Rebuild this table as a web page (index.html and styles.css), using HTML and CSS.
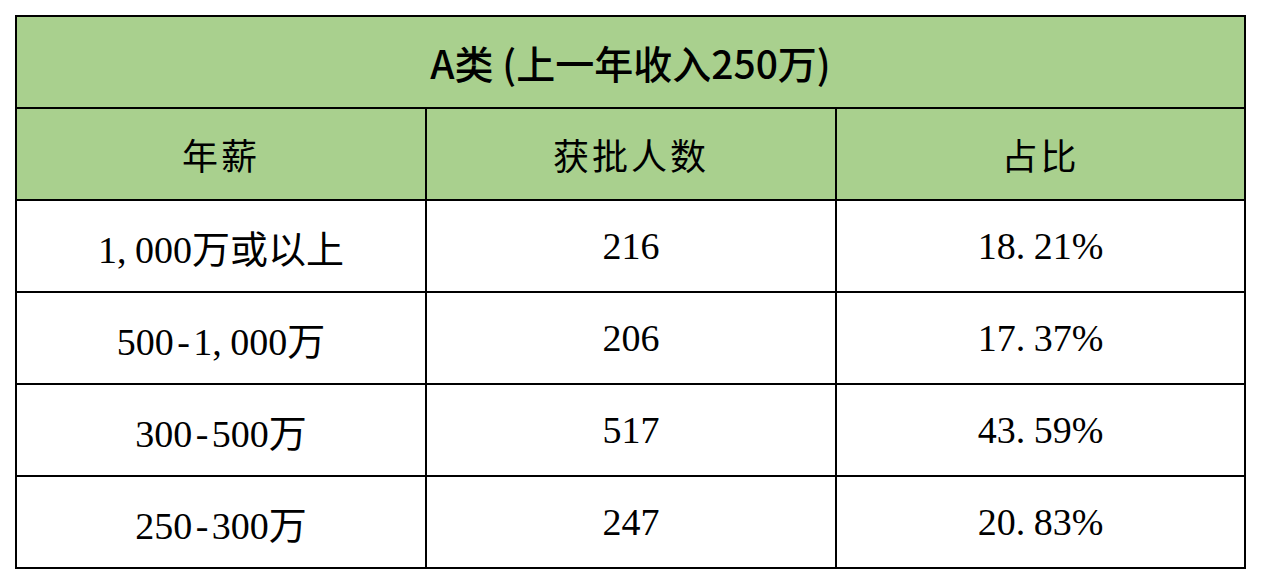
FILE: index.html
```html
<!DOCTYPE html>
<html lang="zh">
<head>
<meta charset="utf-8">
<title>A类 (上一年收入250万)</title>
<link rel="stylesheet" href="styles.css">
</head>
<body>
<table class="grid">
  <colgroup>
    <col class="c1"><col class="c2"><col class="c3">
  </colgroup>
  <thead>
    <tr><th class="title" colspan="3">A类 (上一年收入250万)</th></tr>
    <tr class="head"><th>年薪</th><th>获批人数</th><th>占比</th></tr>
  </thead>
  <tbody>
    <tr><td>1<span class="pt">,</span>000万或以上</td><td>216</td><td>18<span class="pt">.</span>21%</td></tr>
    <tr><td>500<span class="dash">-</span>1<span class="pt">,</span>000万</td><td>206</td><td>17<span class="pt">.</span>37%</td></tr>
    <tr><td>300<span class="dash">-</span>500万</td><td>517</td><td>43<span class="pt">.</span>59%</td></tr>
    <tr><td>250<span class="dash">-</span>300万</td><td>247</td><td>20<span class="pt">.</span>83%</td></tr>
  </tbody>
</table>
</body>
</html>
```

FILE: styles.css
```css
html, body {
  margin: 0;
  background: #ffffff;
}
body {
  padding: 15px 0 0 15px;
}
.grid {
  table-layout: fixed;
  width: 1231px;
  border-collapse: separate;
  border-spacing: 2px;
  background: #000000;
}
.c1 { width: 408px; }
.c2 { width: 408px; }
.c3 { width: 407px; }
.grid th,
.grid td {
  height: 90px;
  padding: 0;
  text-align: center;
  vertical-align: middle;
  color: #000000;
}
.grid th {
  background: #a9d08e;
}
.grid td {
  background: #ffffff;
  font-family: "Liberation Serif", "Noto Sans CJK SC", serif;
  font-size: 38px;
  font-weight: 400;
}
.title {
  font-family: "Noto Sans CJK SC", sans-serif;
  font-size: 39px;
  font-weight: 500;
}
.head th {
  font-family: "Noto Sans CJK SC", serif;
  font-size: 36px;
  font-weight: 400;
  letter-spacing: 3px;
}
.pt {
  letter-spacing: 0.22em;
}
.dash {
  padding: 0 0.09em;
}
```
